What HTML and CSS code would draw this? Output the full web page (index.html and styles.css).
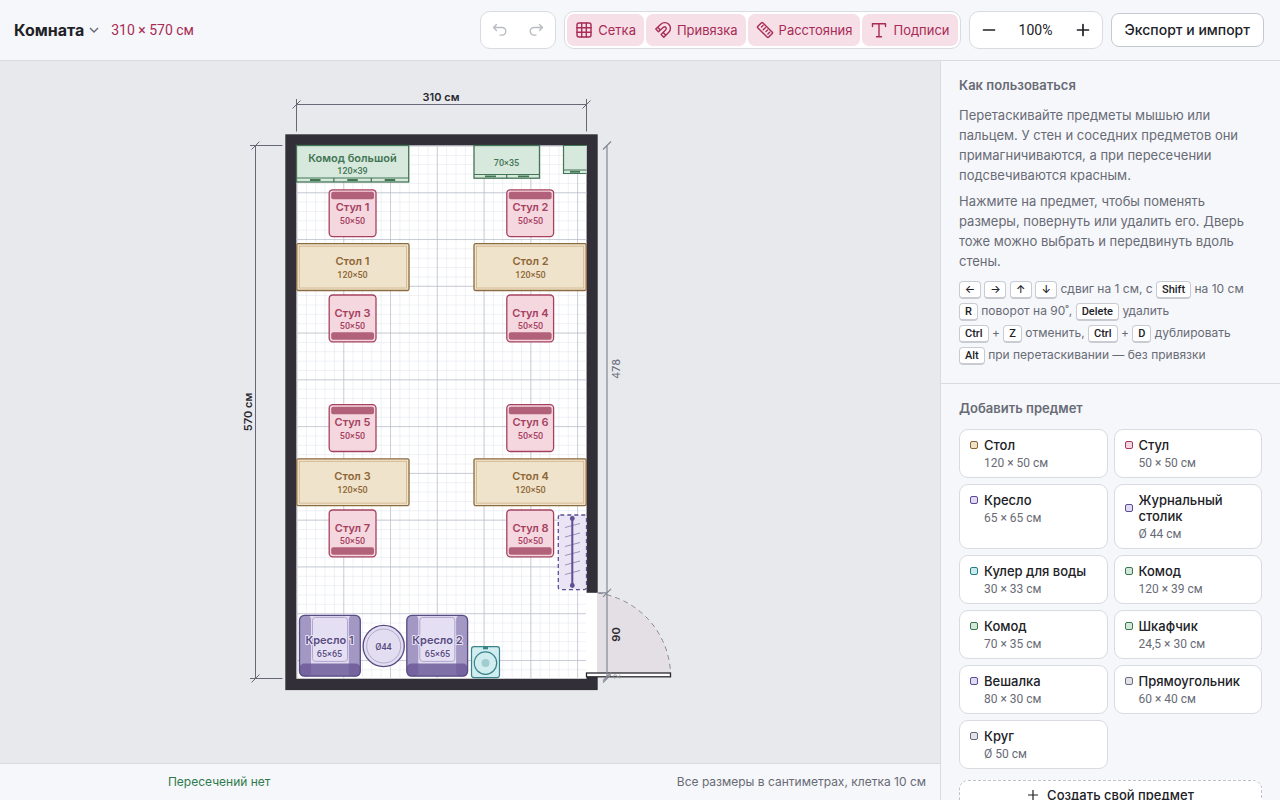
FILE: index.html
```html
<!DOCTYPE html>
<html lang="ru">
<head>
<meta charset="utf-8">
<meta name="viewport" content="width=device-width, initial-scale=1">
<title>Комната</title>
<link rel="stylesheet" href="styles.css">
</head>
<body>
<div class="app">
  <header class="topbar">
    <button class="room-menu" type="button">Комната
      <svg class="chevron" viewBox="0 0 10 10" aria-hidden="true"><path d="M1 3l4 4 4-4"/></svg>
    </button>
    <span class="room-size">310 × 570 см</span>
    <div class="tools">
      <div class="group">
        <button class="icon-btn" type="button" disabled aria-label="Отменить"><svg class="icon" viewBox="0 0 18 18"><path d="M5.500 3.500L2.500 6.500l3 3M2.500 6.500h8.500a3.800 3.800 0 0 1 0 7.600H9"/></svg></button>
        <button class="icon-btn" type="button" disabled aria-label="Повторить"><svg class="icon" viewBox="0 0 18 18"><path d="M12.500 3.500l3 3-3 3M15.500 6.500H7a3.800 3.800 0 0 0 0 7.600h2"/></svg></button>
      </div>
      <div class="group">
        <button class="toggle" type="button" aria-pressed="true"><svg class="icon" viewBox="0 0 18 18"><rect x="2" y="2" width="14" height="14" rx="2"/><path d="M6.700 2v14M11.300 2v14M2 6.700h14M2 11.300h14"/></svg>Сетка</button>
        <button class="toggle" type="button" aria-pressed="true"><svg class="icon" viewBox="0 0 18 18"><path d="M1.800 8L6.800 3.300a5.600 5.600 0 0 1 8 7.900l-5 5-2.700-2.700 4.700-4.800a1.700 1.700 0 0 0-2.400-2.400L4.500 10.800zM3.700 6.200l2.700 2.700M9.100 11.500l2.700 2.700"/></svg>Привязка</button>
        <button class="toggle" type="button" aria-pressed="true"><svg class="icon" viewBox="0 0 18 18"><path d="M1.700 5.500l3.800-3.800a.9.900 0 0 1 1.200 0l9.600 9.600a.9.900 0 0 1 0 1.200l-3.800 3.800a.9.900 0 0 1-1.200 0L1.700 6.700a.9.900 0 0 1 0-1.200zM7 4.500L5.500 6M9.300 6.700L7.200 8.800M11.500 9L10 10.500M13.700 11.200l-1.800 1.800"/></svg>Расстояния</button>
        <button class="toggle" type="button" aria-pressed="true"><svg class="icon" viewBox="0 0 18 18"><path d="M2.500 5.500V2.800h13v2.700M9 2.800v13M6.500 15.800h5"/></svg>Подписи</button>
      </div>
      <div class="group">
        <button class="icon-btn zoom-btn" type="button" aria-label="Уменьшить"><svg class="icon" viewBox="0 0 18 18"><path d="M3.500 9h11"/></svg></button>
        <output class="zoom-value">100%</output>
        <button class="icon-btn zoom-btn" type="button" aria-label="Увеличить"><svg class="icon" viewBox="0 0 18 18"><path d="M3.500 9h11M9 3.500v11"/></svg></button>
      </div>
      <button class="export" type="button">Экспорт и импорт</button>
    </div>
  </header>

  <main class="workspace">
    <svg class="plan" viewBox="0 0 940 702" role="img" aria-label="План комнаты">
      <defs>
        <pattern id="minor" width="9.354" height="9.354" patternUnits="userSpaceOnUse"><path class="grid-minor" d="M9.354 0H0V9.354"/></pattern>
        <pattern id="major" width="46.770" height="46.770" patternUnits="userSpaceOnUse"><path class="grid-major" d="M46.770 0H0V46.770"/></pattern>
        <g id="chair-seat"><rect class="pink line" width="46.800" height="46.800" rx="3.500"/></g>
        <g id="chair-up"><use href="#chair-seat"/><rect class="chair-back" x="2" y="2" width="42.800" height="7.500" rx="2"/></g>
        <g id="chair-down"><use href="#chair-seat"/><rect class="chair-back" x="2" y="37.300" width="42.800" height="7.500" rx="2"/></g>
        <g id="table"><rect class="sand line" width="112.200" height="46.800" rx="1.500"/><rect class="sand-inner" x="2.500" y="2.500" width="107.200" height="41.800"/></g>
        <g id="armchair">
          <rect class="violet" width="60.800" height="60.800" rx="5"/>
          <rect class="arm" width="11.500" height="60.800" rx="4"/>
          <rect class="arm" x="49.300" width="11.500" height="60.800" rx="4"/>
          <rect class="arm-back" y="48" width="60.800" height="12.800" rx="5"/>
          <rect class="cushion" x="13" y="2" width="35" height="44" rx="3"/>
          <rect class="violet-outline" width="60.800" height="60.800" rx="5"/>
        </g>
      </defs>

      <g transform="translate(296.500 84.500)">
        <rect class="wall" x="-11.200" y="-11.200" width="312.400" height="555.800"/>
        <rect class="floor" width="290" height="533.200"/>
        <rect fill="url(#minor)" width="290" height="533.200"/>
        <rect fill="url(#major)" width="290" height="533.200"/>

        <rect class="floor" x="289.500" y="447.300" width="11.800" height="84.200"/>
        <path class="swing" d="M301.200 448A84.200 84.200 0 0 1 374.200 531.300H301.200z"/>
        <path class="swing-arc" d="M301.200 447.500A84.200 84.200 0 0 1 374 527"/>

        <g class="green-group">
          <rect class="green line" width="112.200" height="36.500"/>
          <path class="green-line" d="M0 32.500h112.200M37.400 32.500v4M74.800 32.500v4"/>
          <path class="handle" d="M13.500 34.500h10.500M50.800 34.500h10.500M88.200 34.500h10.500"/>
          <rect class="green line" x="177.500" width="65.500" height="32.700"/>
          <path class="green-line" d="M177.500 29h65.500M210.200 29v3.700"/>
          <path class="handle" d="M188.500 30.800h11M221.500 30.800h11"/>
          <path class="green" d="M267 0h23v28h-23z"/>
          <path class="green-line" d="M290 0H267v28h23M267 24.500h23"/>
          <path class="handle" d="M273.500 26.300h10"/>
        </g>

        <use href="#chair-up" x="32.700" y="44.300"/>
        <use href="#chair-up" x="210.300" y="44.300"/>
        <use href="#table" x="0.300" y="98.200"/>
        <use href="#table" x="177.500" y="98.200"/>
        <use href="#chair-down" x="32.700" y="149.500"/>
        <use href="#chair-down" x="210.300" y="149.500"/>
        <use href="#chair-up" x="32.700" y="259.200"/>
        <use href="#chair-up" x="210.300" y="259.200"/>
        <use href="#table" x="0.300" y="313.300"/>
        <use href="#table" x="177.500" y="313.300"/>
        <use href="#chair-down" x="32.700" y="364.500"/>
        <use href="#chair-down" x="210.300" y="364.500"/>

        <rect class="hanger" x="261.800" y="369.500" width="28.200" height="74.600" rx="2"/>
        <path class="hook" d="M268.500 382l15-4M268.500 391.500l15-4M268.500 401l15-4M268.500 410l15-4M268.500 419.500l15-4M268.500 429l15-4"/>
        <path class="rod" d="M275.800 373v67"/>
        <circle class="knob" cx="275.800" cy="373" r="2.400"/><circle class="knob" cx="275.800" cy="440" r="2.400"/>

        <use href="#armchair" x="3" y="469.900"/>
        <use href="#armchair" x="110.300" y="469.900"/>
        <circle class="violet-round" cx="87.200" cy="500.500" r="20.600"/>
        <circle class="violet-thin" cx="87.200" cy="500.500" r="17"/>

        <rect class="teal" x="175" y="501.200" width="28" height="30.900" rx="2.500"/>
        <circle class="teal" cx="189" cy="517.600" r="11.200"/>
        <circle class="teal-dot" cx="189" cy="517.600" r="4"/>
        <rect class="teal-tap" x="186.500" y="501.200" width="5" height="2.600"/>

        <rect class="leaf" x="290" y="527.500" width="84" height="3.800"/>

        <g class="dim">
          <path d="M0-46.500V-14M290-46.500V-14M0-41H290M-4-37l8-8M286-37l8-8"/>
          <path d="M-46.500 0H-14M-46.500 533H-14M-41 0V533M-45 4l8-8M-45 537l8-8"/>
          <path class="dim-light" d="M310.500 0V533M302 447.300h9M306.500 4l8-8M306.500 451.300l8-8M306.500 535.200l8-8M306.500 537.200l8-8"/>
        </g>

        <g class="dim-text">
          <text x="144.500" y="-45">310 см</text>
          <text transform="translate(-45 266.500) rotate(-90)">570 см</text>
          <text class="dim-muted" transform="translate(323 223.500) rotate(-90)">478</text>
          <text transform="translate(323 489) rotate(-90)">90</text>
          <text class="dim-faint" transform="translate(323 531) rotate(-90)">2</text>
        </g>

        <g class="label green-text"><text x="56" y="16">Комод большой</text><text class="sub" x="56" y="28">120×39</text><text class="sub" x="210" y="20">70×35</text></g>
        <g class="label pink-text">
          <text x="56" y="65">Стул 1</text><text class="sub" x="56" y="78">50×50</text>
          <text x="234" y="65">Стул 2</text><text class="sub" x="234" y="78">50×50</text>
          <text x="56" y="171">Стул 3</text><text class="sub" x="56" y="183">50×50</text>
          <text x="234" y="171">Стул 4</text><text class="sub" x="234" y="183">50×50</text>
          <text x="56" y="280">Стул 5</text><text class="sub" x="56" y="293">50×50</text>
          <text x="234" y="280">Стул 6</text><text class="sub" x="234" y="293">50×50</text>
          <text x="56" y="386">Стул 7</text><text class="sub" x="56" y="398">50×50</text>
          <text x="234" y="386">Стул 8</text><text class="sub" x="234" y="398">50×50</text>
        </g>
        <g class="label sand-text">
          <text x="56" y="119">Стол 1</text><text class="sub" x="56" y="132">120×50</text>
          <text x="234" y="119">Стол 2</text><text class="sub" x="234" y="132">120×50</text>
          <text x="56" y="334">Стол 3</text><text class="sub" x="56" y="347">120×50</text>
          <text x="234" y="334">Стол 4</text><text class="sub" x="234" y="347">120×50</text>
        </g>
        <g class="label violet-text">
          <text x="33" y="498">Кресло 1</text><text class="sub" x="33" y="511">65×65</text>
          <text x="141" y="498">Кресло 2</text><text class="sub" x="141" y="511">65×65</text>
          <text class="sub" x="87" y="504">Ø44</text>
        </g>
      </g>
    </svg>
    <footer class="status">
      <span class="status-ok">Пересечений нет</span>
      <span class="status-hint">Все размеры в сантиметрах, клетка 10 см</span>
    </footer>
  </main>

  <aside class="panel">
    <section class="section">
      <h2>Как пользоваться</h2>
      <p>Перетаскивайте предметы мышью или пальцем. У стен и соседних предметов они примагничиваются, а при пересечении подсвечиваются красным.</p>
      <p>Нажмите на предмет, чтобы поменять размеры, повернуть или удалить его. Дверь тоже можно выбрать и передвинуть вдоль стены.</p>
      <div class="keys">
        <div><kbd class="arrow">←</kbd> <kbd class="arrow">→</kbd> <kbd class="arrow">↑</kbd> <kbd class="arrow">↓</kbd> сдвиг на 1 см, с <kbd>Shift</kbd> на 10 см</div>
        <div><kbd>R</kbd> поворот на 90˚, <kbd>Delete</kbd> удалить</div>
        <div><kbd>Ctrl</kbd> + <kbd>Z</kbd> отменить, <kbd>Ctrl</kbd> + <kbd>D</kbd> дублировать</div>
        <div><kbd>Alt</kbd> при перетаскивании — без привязки</div>
      </div>
    </section>
    <section class="section">
      <h2>Добавить предмет</h2>
      <div class="catalog">
        <button class="card c-sand" type="button"><span class="name">Стол</span><span class="size">120 × 50 см</span></button>
        <button class="card c-pink" type="button"><span class="name">Стул</span><span class="size">50 × 50 см</span></button>
        <button class="card c-violet" type="button"><span class="name">Кресло</span><span class="size">65 × 65 см</span></button>
        <button class="card c-violet" type="button"><span class="name">Журнальный столик</span><span class="size">Ø 44 см</span></button>
        <button class="card c-teal" type="button"><span class="name">Кулер для воды</span><span class="size">30 × 33 см</span></button>
        <button class="card c-green" type="button"><span class="name">Комод</span><span class="size">120 × 39 см</span></button>
        <button class="card c-green" type="button"><span class="name">Комод</span><span class="size">70 × 35 см</span></button>
        <button class="card c-green" type="button"><span class="name">Шкафчик</span><span class="size">24,5 × 30 см</span></button>
        <button class="card c-violet" type="button"><span class="name">Вешалка</span><span class="size">80 × 30 см</span></button>
        <button class="card c-gray" type="button"><span class="name">Прямоугольник</span><span class="size">60 × 40 см</span></button>
        <button class="card c-gray" type="button"><span class="name">Круг</span><span class="size">Ø 50 см</span></button>
      </div>
      <button class="create" type="button"><svg viewBox="0 0 12 12" aria-hidden="true"><path d="M6 1v10M1 6h10"/></svg>Создать свой предмет</button>
    </section>
  </aside>
</div>
</body>
</html>
```

FILE: styles.css
```css
:root {
  --ui: "Inter", "Liberation Sans", sans-serif;
  --num: "Roboto", "Noto Sans", sans-serif;
  --surface: #f6f7fa;
  --border: #d9dbe2;
  --ink: #202126;
  --muted: #686b76;
  --accent: #a82a55;
}
*, *::before { box-sizing: border-box; }
body { margin: 0; font: 13px/20px var(--ui); color: var(--ink); background: var(--surface); }
button { font: inherit; color: inherit; margin: 0; cursor: pointer; }
h2, p { margin: 0; }

.app { display: grid; grid-template: auto minmax(0, 1fr) / minmax(0, 1fr) 340px; height: 100vh; overflow: hidden; }

.topbar { grid-column: 1 / -1; display: flex; align-items: center; padding: 11px 16px 11px 14px; border-bottom: 1px solid var(--border); }
.room-menu { display: flex; align-items: center; gap: 5px; padding: 0; border: 0; background: none; font-size: 16px; font-weight: 700; }
.chevron { width: 10px; height: 10px; fill: none; stroke: #666973; stroke-width: 1.400; }
.room-size { margin-left: 12px; font: 14px/20px var(--num); color: var(--accent); }
.tools { display: flex; align-items: center; gap: 8px; margin-left: auto; }
.group { display: flex; align-items: center; gap: 2px; padding: 2px; background: #fff; border: 1px solid var(--border); border-radius: 10px; }
.icon { width: 18px; height: 18px; fill: none; stroke: currentColor; stroke-width: 1.400; stroke-linecap: round; stroke-linejoin: round; }
.icon-btn { display: grid; place-items: center; width: 34px; height: 32px; padding: 0; border: 0; background: none; }
.icon-btn:disabled { color: #b9bbc2; cursor: default; }
.zoom-btn .icon { stroke-width: 1.700; }
.zoom-value { width: 56px; text-align: center; font: 14px/20px var(--num); }
.toggle { display: flex; align-items: center; gap: 5px; height: 32px; padding: 0 8px; border: 0; border-radius: 7px; background: #f6dfe7; color: var(--accent); }
.export { height: 34px; padding: 0 13px; border: 1px solid #c7c9d2; border-radius: 8px; background: #fff; font-size: 14px; font-weight: 500; }

.workspace { display: flex; flex-direction: column; min-width: 0; background: #e8e9ed; }
.plan { flex: 1; min-height: 0; width: 100%; display: block; }
.status { display: grid; grid-template-columns: 9fr 11fr; align-items: center; padding: 8px 14px; background: var(--surface); border-top: 1px solid var(--border); font-size: 12px; color: var(--muted); }
.status-ok { text-align: center; color: #2e7a4d; }
.status-hint { text-align: right; }

.panel { min-height: 0; overflow: hidden; border-left: 1px solid var(--border); }
.section { padding: 14px 18px 17px; }
.section + .section { border-top: 1px solid var(--border); }
.section h2 { margin-bottom: 10px; font-size: 13px; line-height: 20px; font-weight: 600; color: var(--muted); }
.section p { margin-bottom: 6px; color: var(--muted); }
.keys { padding-top: 1px; font-size: 12px; line-height: 22px; color: var(--muted); white-space: nowrap; }
kbd { display: inline-block; padding: 0 5px; border: 1px solid #c9cbd3; border-bottom-width: 2px; border-radius: 4px; background: #fff; color: var(--ink); font: 500 11px/15px var(--num); }
.arrow { width: 22px; padding: 0; text-align: center; font-family: var(--ui); }

.catalog { display: grid; grid-template-columns: 1fr 1fr; gap: 6px; padding-top: 1px; }
.card { display: grid; grid-template-columns: 8px 1fr; gap: 3px 6px; align-items: center; align-content: start; padding: 7px 10px 6px; border: 1px solid var(--border); border-radius: 9px; background: #fff; text-align: left; }
.card::before { content: ""; width: 8px; height: 8px; border: 1px solid var(--line); border-radius: 2px; background: var(--tint); }
.name { font-size: 13px; line-height: 16px; font-weight: 500; }
.size { grid-column: 2; font: 12px/15px var(--num); color: var(--muted); }
.c-sand { --line: #8d6634; --tint: #f0e2c8; }
.c-pink { --line: #a13a5c; --tint: #f7d6df; }
.c-violet { --line: #5b4b91; --tint: #e1daf3; }
.c-teal { --line: #287d85; --tint: #c9ebee; }
.c-green { --line: #3a7650; --tint: #d4e8da; }
.c-gray { --line: #686a7d; --tint: #e2e3e8; }
.create { display: flex; align-items: center; justify-content: center; gap: 8px; width: 100%; margin-top: 11px; padding: 4px 10px; border: 1px dashed #bfc1ca; border-radius: 9px; background: #fff; font-weight: 500; }
.create svg { width: 12px; height: 12px; fill: none; stroke: var(--ink); stroke-width: 1.200; }

.wall { fill: #322f38; }
.floor { fill: #fff; }
.grid-minor { fill: none; stroke: #dde2ea; stroke-width: 1; }
.grid-major { fill: none; stroke: #bcc0cb; stroke-width: 1.400; }
.line { stroke-width: 1.300; }
.green { fill: #d7e8dc; stroke: #437655; }
path.green { stroke: none; }
.green-line { fill: none; stroke: #437655; stroke-width: 1.200; }
.handle { stroke: #437655; stroke-width: 1.800; }
.pink { fill: #f5d7df; stroke: #a5415f; }
.chair-back { fill: #b2617a; }
.sand { fill: #f0e3cb; stroke: #8d6b40; }
.sand-inner { fill: none; stroke: #cfb387; stroke-width: .8; }
.violet { fill: #e1dbf0; }
.arm { fill: #a298c3; }
.arm-back { fill: #6a5897; fill-opacity: .82; }
.cushion { fill: #e4dff2; stroke: #aba0cb; stroke-width: .9; }
.violet-outline { fill: none; stroke: #594c84; stroke-width: 1.300; }
.violet-round { fill: #e3ddf1; stroke: #594c84; stroke-width: 1.300; }
.violet-thin { fill: none; stroke: #a79ec4; stroke-width: .8; }
.teal { fill: #d1edef; stroke: #37848a; stroke-width: 1.200; }
.teal-dot { fill: #a2cdd0; }
.teal-tap { fill: #37848a; }
.hanger { fill: #e9e5f5; stroke: #5e4e92; stroke-width: 1.300; stroke-dasharray: 4 3; }
.hook { stroke: #9188b3; stroke-width: .9; }
.rod { stroke: #5e4e92; stroke-width: 2; }
.knob { fill: #5e4e92; }
.leaf { fill: #fff; stroke: #29272e; stroke-width: 1.300; }
.swing { fill: #e4dfe4; }
.swing-arc { fill: none; stroke: #8b8a93; stroke-width: 1; stroke-dasharray: 5 4; }
.dim path { fill: none; stroke: #666975; stroke-width: 1; }
.dim .dim-light { stroke: #838695; stroke-width: 1.200; }
.dim-text { font: 600 11px var(--ui); text-anchor: middle; fill: #29292f; }
.dim-muted { font-weight: 400; fill: #686b7a; }
.dim-faint { font-size: 9px; font-weight: 400; fill: #92949f; }
.label { font: 600 11px var(--ui); text-anchor: middle; paint-order: stroke; stroke-width: 2px; stroke-linejoin: round; }
.label .sub { font: 500 9px var(--num); }
.green-text { fill: #437655; stroke: #d7e8dc; }
.pink-text { fill: #a5415f; stroke: #f5d7df; }
.sand-text { fill: #8d6637; stroke: #f0e3cb; }
.violet-text { fill: #594c84; stroke: #e8e3f4; }
```
